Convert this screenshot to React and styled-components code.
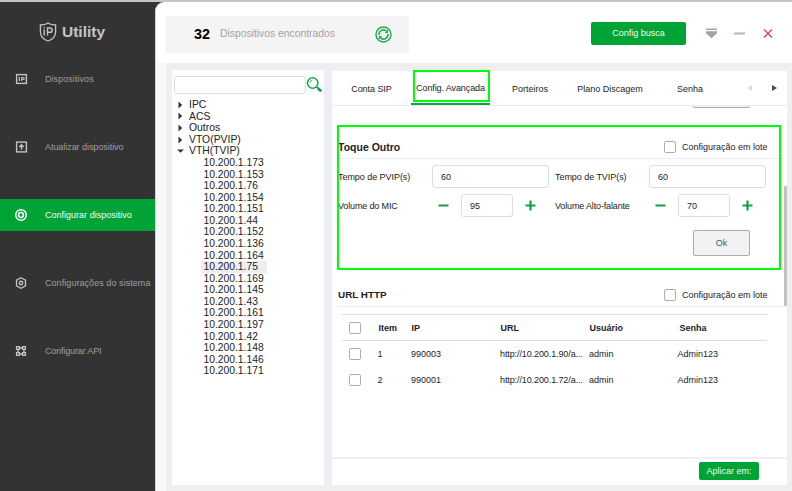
import React from "react";
import styled, { createGlobalStyle } from "styled-components";

const Global = createGlobalStyle`
  *{box-sizing:border-box}
  body{margin:0;background:#333;font:9px/12px "Liberation Sans",Arial,sans-serif;color:#232327;overflow:hidden}
  button,input{font:inherit;color:inherit}
`;
const Window = styled.div`
  width:792px;height:491px;display:grid;grid-template-columns:156px 1fr;grid-template-rows:489px;
  border-top:2px solid #c6c6c6;background:#333;white-space:nowrap;overflow:hidden;
`;
const Text = styled.span`
  display:block;
  font-size:${p => p.$size || 9}px;
  font-weight:${p => (p.$bold ? 700 : 400)};
  letter-spacing:${p => p.$ls || 0}px;
`;
const Sidebar = styled.nav`color:#a2a2a2;background:#333;overflow:hidden;`;
const Brand = styled.div`
  display:flex;align-items:center;gap:5px;height:60px;padding-left:39px;color:#c4c4c4;margin-bottom:1px;
`;
const MenuItem = styled.div`
  height:32px;margin-bottom:36px;display:grid;grid-template-columns:14px 1fr;column-gap:17px;align-items:center;
  padding-left:14px;background:${p => (p.$active ? "#00a335" : "transparent")};
  color:${p => (p.$active ? "#f4fff6" : "#9f9f9f")};
  svg{color:${p => (p.$active ? "#fff" : "#c2c2c2")}}
`;
const Main = styled.main`
  background:#fff;border-top-left-radius:9px;display:grid;grid-template-rows:61px 428px;overflow:hidden;
  border-left:1px solid #d4d4d4;margin-left:-1px;
`;
const Header = styled.header`display:flex;align-items:center;padding:0 0 0 10px;height:64px;`;
const Summary = styled.div`
  width:243px;height:37px;background:#f4f4f4;display:flex;align-items:center;padding-left:28px;color:#a3a3a3;
  margin-right:182px;
`;
const Count = styled(Text)`color:#000;width:26px;`;
const Found = styled(Text)`width:155px;`;
const SearchConfig = styled.button`
  width:95px;height:23px;border:0;border-radius:2px;background:#00a335;color:#effff2;padding:0;margin:0 20px 2px 0;
`;
const WindowButtons = styled.div`display:flex;align-items:center;gap:17px;margin-bottom:2px;`;
const Body = styled.div`background:#efefef;border-left:10px solid #f8f8fc;padding:7px 5px 6px 6px;`;
const Panels = styled.div`
  height:415px;display:grid;grid-template-columns:152px 455px;column-gap:8px;background:#ecedf5;
`;
const TreePanel = styled.section`background:#fff;padding:6px 0 0 2px;`;
const SearchRow = styled.div`display:flex;height:18px;margin-bottom:5px;`;
const SearchInput = styled.input`width:132px;height:18px;border:1px solid #dcdcdf;border-radius:3px;background:#fff;`;
const TreeRow = styled.div`
  height:11.58px;line-height:11.58px;display:flex;align-items:center;color:#222;padding-left:${p => (p.$child ? 27 : 3)}px;
  svg{margin-right:5px;flex:none}
`;
const TreeLabel = styled(Text)`
  padding:0 3px 0 ${p => (p.$child ? 2.5 : 0)}px;background:${p => (p.$selected ? "#ededf4" : "transparent")};
  ${p => p.$selected && "width:66px;"}
  line-height:11.5px;
`;
const Config = styled.section`
  background:#fff;display:grid;grid-template-rows:36px 350px 29px;border-top:1px solid #ecedf5;min-width:0;
  height:415px;
`;
const Tabs = styled.div`
  height:35px;border-bottom:1px solid #ebebef;display:grid;
  grid-template-columns:79px 79px 80px 80px 80px 57px;position:relative;
`;
const Tab = styled.div`
  display:flex;justify-content:center;align-items:center;padding-top:1px;
  ${p => p.$active && "border-bottom:2px solid #12a14a;"}
`;
const TabArrows = styled.div`display:flex;align-items:center;justify-content:flex-end;gap:20px;padding:0 10px 0 0;`;
const Highlight = styled.div`
  position:absolute;pointer-events:none;border:2px solid #00ff06;
  left:${p => p.$x}px;top:${p => p.$y}px;width:${p => p.$w}px;height:${p => p.$h}px;
`;
const Scroll = styled.div`height:350px;position:relative;overflow:hidden;margin-top:-1px;`;
const Thumb = styled.div`position:absolute;right:0;top:80px;width:3px;height:120px;background:#c2c2c4;`;
const CutButton = styled.div`
  width:57px;height:3px;margin:-1px 0 0 361px;border:1px solid #adb1b6;border-top:0;border-radius:0 0 2px 2px;background:#f2f2f2;
`;
const SectionHead = styled.div`
  height:${p => p.$h}px;display:grid;grid-template-columns:326px 18px auto;align-items:end;margin:0 4px 0 6px;
  padding-bottom:5px;border-bottom:1px solid #ebebf1;
`;
const Check = styled.span`
  display:block;width:12px;height:12px;border:1px solid #a9adb2;border-radius:2px;background:#fff;
`;
const Form = styled.div`height:125px;padding:6px 0 0 6px;`;
const Fields = styled.div`
  display:grid;grid-template-columns:94px 123px 94px 117px;grid-template-rows:23px 23px;row-gap:6px;align-items:center;
`;
const Value = styled.div`
  width:${p => p.$w}px;height:23px;border:1px solid #dcdde0;border-radius:3px;display:flex;align-items:center;padding-left:8px;
`;
const Stepper = styled.div`display:flex;align-items:center;gap:12px;padding-left:6px;svg{display:block}`;
const Ok = styled.button`
  display:block;width:57px;height:26px;margin:13px 0 0 355px;border:1px solid #a8adb3;border-radius:2px;background:#f2f2f2;
  color:#555;padding:0;
`;
const Table = styled.div`margin:7px 0 0 10px;width:425px;`;
const TRow = styled.div`
  display:grid;grid-template-columns:28.5px 33.5px 89px 89px 88.5px 1fr;height:26px;align-items:center;padding-left:7px;
  ${p => p.$head && "height:27px;border-top:1px solid #dedee1;border-bottom:1px solid #dedee1;grid-template-columns:29.5px 33px 89px 89px 90px 1fr;"}
`;
const Footer = styled.footer`
  border-top:2px solid #efeff5;display:flex;justify-content:flex-end;align-items:flex-start;padding:3px 28px 0 0;
`;
const Apply = styled.button`width:60px;height:18px;border:0;border-radius:2px;background:#00a335;color:#effff2;padding:0;`;

const Shield = () => (
  <svg width="18" height="20" viewBox="0 0 18 20" fill="none" stroke="currentColor">
    <path d="M9 1C7 2.500 4 3 1.400 3V10c0 4.300 3.200 7.400 7.600 9 4.400-1.600 7.600-4.700 7.600-9V3C14 3 11 2.500 9 1Z" strokeWidth="1.300" />
    <path d="M5.200 7.500V13.500M5.200 5v1.200M8.500 13.500V6h2.500a2 2 0 0 1 0 4.300H8.500" strokeWidth="1.400" />
  </svg>
);
const Icon = ({ kind }) => (
  <svg width="14" height="14" viewBox="0 0 14 14" fill="none" stroke="currentColor">
    {kind === "ip" && <><rect x="2.600" y="2.600" width="9.800" height="8.800" strokeWidth="1.400" /><path d="M5.300 5v4M7.600 9V5.500h1.600q1 0 1 1t-1 1H7.600" strokeWidth="1.200" /></>}
    {kind === "up" && <><rect x="2.600" y="2.100" width="9.800" height="9.800" strokeWidth="1.400" /><path d="M7.500 4.700v5M5.300 7l2.200-2.200L9.700 7" strokeWidth="1.500" /></>}
    {kind === "target" && <><circle cx="7" cy="7" r="5.300" strokeWidth="1.500" /><circle cx="7" cy="7" r="2.400" strokeWidth="1.500" /></>}
    {kind === "hex" && <><path d="M7 1.700l4.500 2.500v5.600L7 12.300 2.500 9.800V4.200Z" strokeWidth="1.300" /><circle cx="7" cy="7" r="1.700" strokeWidth="1.400" /></>}
    {kind === "api" && <path d="M2.600 2.600h2.800v2.800H2.600ZM8.600 2.600h2.800v2.800H8.600ZM2.600 8.600h2.800v2.800H2.600ZM8.600 8.600h2.800v2.800H8.600ZM5.400 4h3.200M5.400 10h3.200M4 5.400v3.200M10 5.400v3.200" strokeWidth="1.400" />}
  </svg>
);
const Refresh = () => (
  <svg width="17" height="17" viewBox="0 0 18 18" fill="none" stroke="#18ad55">
    <circle cx="9" cy="9" r="8" strokeWidth="1.500" />
    <path d="M4.300 9.600A4.700 4.700 0 0 1 12.400 5.700M13.700 8.400A4.700 4.700 0 0 1 5.600 12.300" strokeWidth="1.600" />
    <path d="M13.300 4.300v2.600h-2.600M4.700 13.700v-2.600h2.600" strokeWidth="1.200" />
  </svg>
);
const Magnifier = () => (
  <svg width="17" height="17" viewBox="0 0 17 17" fill="none" stroke="#16a34a">
    <circle cx="6.700" cy="7" r="5.200" strokeWidth="1.500" />
    <path d="M3.900 6.700a2.900 2.900 0 0 1 2.500-2.500" strokeWidth="0.800" />
    <path d="M10.400 10.800l1.500 1.500" strokeWidth="1.500" /><path d="M11.700 12.100l3.600 3.200" strokeWidth="2.800" />
  </svg>
);
const Arrow = ({ open }) => (
  <svg width="7" height="8" viewBox="0 0 7 8" fill="#333">{open ? <path d="M0 2.500h7L3.500 5.800Z" /> : <path d="M1.500.5v7L5.200 4Z" />}</svg>
);
const Sign = ({ plus }) => (
  <svg width="11" height="11" viewBox="0 0 11 11"><path d={plus ? "M.5 5.500h10M5.500.5v10" : "M.5 5.500h10"} stroke="#12a14a" strokeWidth="2.200" /></svg>
);

const menu = [["Dispositivos", "ip", 0.06], ["Atualizar dispositivo", "up", -0.05], ["Configurar dispositivo", "target", 0.01], ["Configurações do sistema", "hex", 0.06], ["Configurar API", "api", -0.15]];
const groups = ["IPC", "ACS", "Outros", "VTO(PVIP)", "VTH(TVIP)"];
const hosts = [173, 153, 76, 154, 151, 44, 152, 136, 164, 75, 169, 145, 43, 161, 197, 42, 148, 146, 171];
const rows = [["1", "990003", "http://10.200.1.90/a..."], ["2", "990001", "http://10.200.1.72/a..."]];

const Volume = ({ value }) => (
  <Stepper><Sign /><Value $w={52}><Text>{value}</Text></Value><Sign plus /></Stepper>
);

export default function App() {
  return (
    <Window>
      <Global />
      <Sidebar>
        <Brand><Shield /><Text $size={15.5} $bold>Utility</Text></Brand>
        {menu.map(([label, kind, ls]) => (
          <MenuItem key={kind} $active={kind === "target"}><Icon kind={kind} /><Text $ls={ls}>{label}</Text></MenuItem>
        ))}
      </Sidebar>
      <Main>
        <Header>
          <Summary>
            <Count $size={14.400} $bold>32</Count>
            <Found $size={10.350}>Dispositivos encontrados</Found>
            <Refresh />
          </Summary>
          <SearchConfig>Config busca</SearchConfig>
          <WindowButtons>
            <svg width="11" height="11" viewBox="0 0 11 11" fill="#9fa3ad"><path d="M0 .5h11v1.500H0ZM0 3.200h11v2L5.500 10.300 0 5.200Z" /></svg>
            <svg width="11" height="11" viewBox="0 0 11 11"><path d="M0 5.500h11" stroke="#b2b6bd" strokeWidth="2" /></svg>
            <svg width="12" height="11" viewBox="0 0 12 11"><path d="M2 1.500l8 8M10 1.500l-8 8" stroke="#e94b50" strokeWidth="1.500" /></svg>
          </WindowButtons>
        </Header>
        <Body>
          <Panels>
            <TreePanel>
              <SearchRow><SearchInput aria-label="Buscar" /><Magnifier /></SearchRow>
              {groups.map((g, i) => (
                <TreeRow key={g}><Arrow open={i === 4} /><TreeLabel $size={10.400}>{g}</TreeLabel></TreeRow>
              ))}
              {hosts.map(h => (
                <TreeRow key={h} $child><TreeLabel $child $size={10.300} $selected={h === 75}>{"10.200.1." + h}</TreeLabel></TreeRow>
              ))}
            </TreePanel>
            <Config>
              <Tabs>
                <Tab><Text $ls={-0.050}>Conta SIP</Text></Tab>
                <Tab $active><Text $ls={-0.100}>Config. Avançada</Text></Tab>
                <Tab>Porteiros</Tab>
                <Tab>Plano Discagem</Tab>
                <Tab>Senha</Tab>
                <TabArrows>
                  <svg width="5" height="6" viewBox="0 0 5 6"><path d="M5 0v6L0 3Z" fill="#dcdcdc" /></svg>
                  <svg width="5" height="6" viewBox="0 0 5 6"><path d="M0 0v6L5 3Z" fill="#444" /></svg>
                </TabArrows>
                <Highlight $x={81} $y={-1} $w={77} $h={32} />
              </Tabs>
              <Scroll>
                <CutButton />
                <SectionHead $h={51}><Text $size={10.500} $bold>Toque Outro</Text><Check /><Text>Configuração em lote</Text></SectionHead>
                <Form>
                  <Fields>
                    <Text $ls={-0.050}>Tempo de PVIP(s)</Text><Value $w={117}>60</Value>
                    <Text $ls={-0.050}>Tempo de TVIP(s)</Text><Value $w={117}>60</Value>
                    <Text $ls={-0.150}>Volume do MIC</Text><Volume value="95" />
                    <Text $ls={-0.150}>Volume Alto-falante</Text><Volume value="70" />
                  </Fields>
                  <Ok>Ok</Ok>
                </Form>
                <SectionHead $h={23}><Text $size={9.900} $bold>URL HTTP</Text><Check /><Text>Configuração em lote</Text></SectionHead>
                <Table>
                  <TRow $head><Check /><Text $bold>Item</Text><Text $bold>IP</Text><Text $bold>URL</Text><Text $bold>Usuário</Text><Text $bold>Senha</Text></TRow>
                  {rows.map(([n, ip, url]) => (
                    <TRow key={n}><Check /><Text>{n}</Text><Text>{ip}</Text><Text $ls={-0.100}>{url}</Text><Text>admin</Text><Text>Admin123</Text></TRow>
                  ))}
                </Table>
                <Highlight $x={5} $y={19} $w={444} $h={145} />
                <Thumb />
              </Scroll>
              <Footer><Apply>Aplicar em:</Apply></Footer>
            </Config>
          </Panels>
        </Body>
      </Main>
    </Window>
  );
}
